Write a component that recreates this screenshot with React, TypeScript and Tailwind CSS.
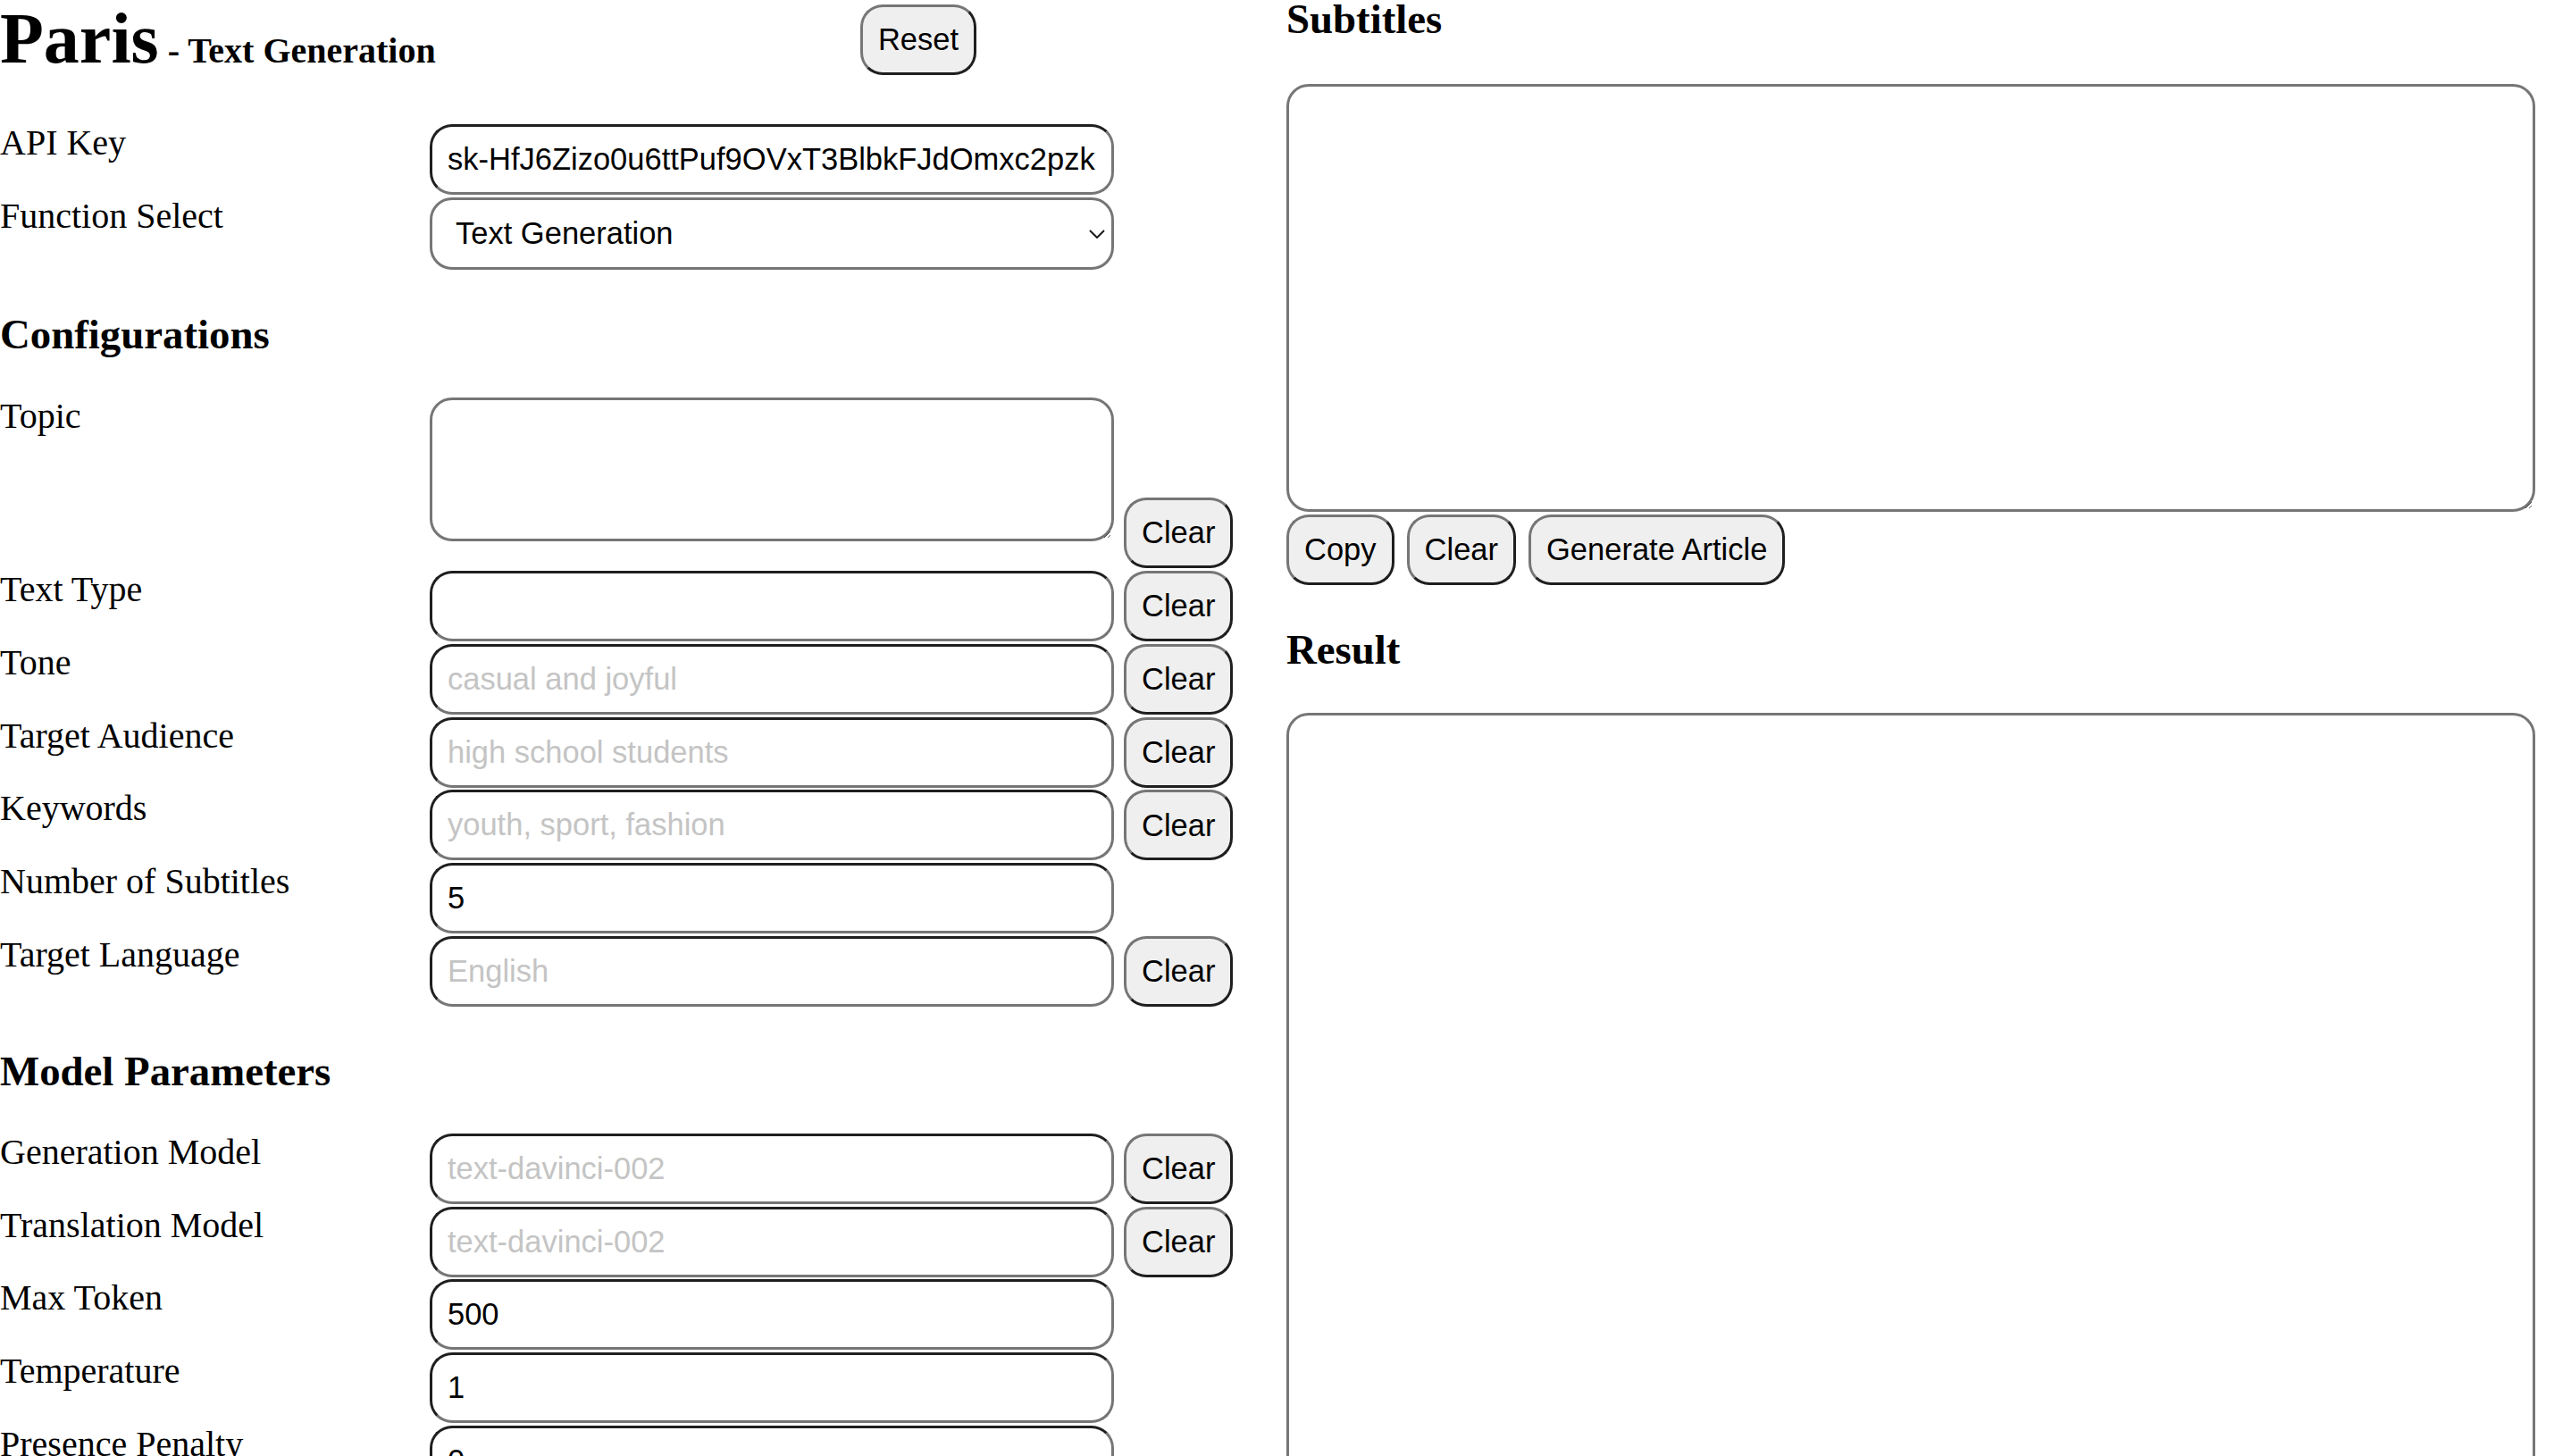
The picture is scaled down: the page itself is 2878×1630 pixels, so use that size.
import React from "react";

const INPUT =
  "box-border block h-[79px] w-[766px] rounded-[25px] border-[3px] border-solid border-t-[#1f1f1f] border-l-[#1f1f1f] border-r-[#767676] border-b-[#767676] bg-white pl-[17px] pr-[17px] font-['Liberation_Sans',Arial,sans-serif] text-[34.5px] text-black outline-none placeholder:text-[#c4c4c4]";
const BTN =
  "box-border flex h-[79px] shrink-0 items-center justify-center rounded-[25px] border-[3px] border-solid border-t-[#767676] border-l-[#767676] border-r-[#1f1f1f] border-b-[#1f1f1f] bg-[#efefef] px-[17px] font-['Liberation_Sans',Arial,sans-serif] text-[34.5px] leading-none text-black";
const TEXTAREA =
  "box-border block rounded-[25px] border-[3px] border-solid border-[#767676] bg-white p-[6px] font-['Liberation_Sans',Arial,sans-serif] text-[34.5px] text-black outline-none";
const LABEL =
  "w-[481px] shrink-0 pt-[1px] font-['Liberation_Serif','Times_New_Roman',serif] text-[40px] leading-[40px] text-black";
const H3 =
  "font-['Liberation_Serif','Times_New_Roman',serif] text-[46.8px] font-bold leading-[47px] text-black";

function Row({
  label,
  children,
  className,
}: {
  label: string;
  children: React.ReactNode;
  className?: string;
}) {
  return (
    <div className={"flex " + (className ?? "h-[81.8px]")}>
      <div className={LABEL}>{label}</div>
      <div className="flex items-start gap-[11px]">{children}</div>
    </div>
  );
}

function Field({
  label,
  value,
  placeholder,
  clear,
}: {
  label: string;
  value?: string;
  placeholder?: string;
  clear?: boolean;
}) {
  return (
    <Row label={label}>
      <input className={INPUT} defaultValue={value} placeholder={placeholder} />
      {clear && (
        <button type="button" className={BTN}>
          Clear
        </button>
      )}
    </Row>
  );
}

export default function App() {
  return (
    <div className="h-[1630px] w-[2878px] overflow-hidden bg-white text-black">
      <div className="grid grid-cols-2">
        {/* Left column */}
        <div>
          <div className="flex h-[139px] w-[1093px] items-start justify-between">
            <h1 className="mt-[3px] whitespace-pre font-['Liberation_Serif','Times_New_Roman',serif] text-[80px] font-bold leading-[80px]">
              Paris<span className="text-[40px]"> - Text Generation</span>
            </h1>
            <button type="button" className={BTN + " mt-[5px] h-[78px]"}>
              Reset
            </button>
          </div>

          <Row label="API Key" className="h-[82px]">
            <input
              className={INPUT}
              defaultValue="sk-HfJ6Zizo0u6ttPuf9OVxT3BlbkFJdOmxc2pzk"
            />
          </Row>
          <Row label="Function Select" className="h-[82px]">
            <div className="relative w-[766px]">
              <select
                defaultValue="Text Generation"
                className="box-border block h-[81px] w-full appearance-none rounded-[25px] border-[3px] border-solid border-[#767676] bg-white pl-[26px] font-['Liberation_Sans',Arial,sans-serif] text-[34.5px] text-black outline-none"
              >
                <option>Text Generation</option>
                <option>Translation</option>
              </select>
              <svg
                className="pointer-events-none absolute right-[10px] top-[36px] h-[10px] w-[18px]"
                viewBox="0 0 18 10"
                fill="none"
              >
                <path d="M1 1 L9 9 L17 1" stroke="#1a1a1a" strokeWidth="2" />
              </svg>
            </div>
          </Row>

          <h3 className={H3 + " mt-[48px] mb-[47px]"}>Configurations</h3>

          <Row label="Topic" className="h-[194px]">
            <textarea className={TEXTAREA + " h-[161px] w-[766px]"} />
            <button type="button" className={BTN + " mt-[112px]"}>
              Clear
            </button>
          </Row>
          <Field label="Text Type" clear />
          <Field label="Tone" placeholder="casual and joyful" clear />
          <Field label="Target Audience" placeholder="high school students" clear />
          <Field label="Keywords" placeholder="youth, sport, fashion" clear />
          <Field label="Number of Subtitles" value="5" />
          <Field label="Target Language" placeholder="English" clear />

          <h3 className={H3 + " mt-[46px] mb-[46px]"}>Model Parameters</h3>

          <Field label="Generation Model" placeholder="text-davinci-002" clear />
          <Field label="Translation Model" placeholder="text-davinci-002" clear />
          <Field label="Max Token" value="500" />
          <Field label="Temperature" value="1" />
          <Field label="Presence Penalty" value="0" />
          <Field label="Frequency Penalty" value="0" />
        </div>

        {/* Right column */}
        <div className="pl-[1px]">
          <h3 className={H3 + " mt-[-2px]"}>Subtitles</h3>
          <textarea className={TEXTAREA + " mt-[49px] h-[479px] w-[1398px]"} />
          <div className="mt-[3px] flex gap-[14px]">
            <button type="button" className={BTN}>
              Copy
            </button>
            <button type="button" className={BTN}>
              Clear
            </button>
            <button type="button" className={BTN}>
              Generate Article
            </button>
          </div>
          <h3 className={H3 + " mt-[49px]"}>Result</h3>
          <textarea className={TEXTAREA + " mt-[47px] h-[1000px] w-[1398px]"} />
        </div>
      </div>
    </div>
  );
}
